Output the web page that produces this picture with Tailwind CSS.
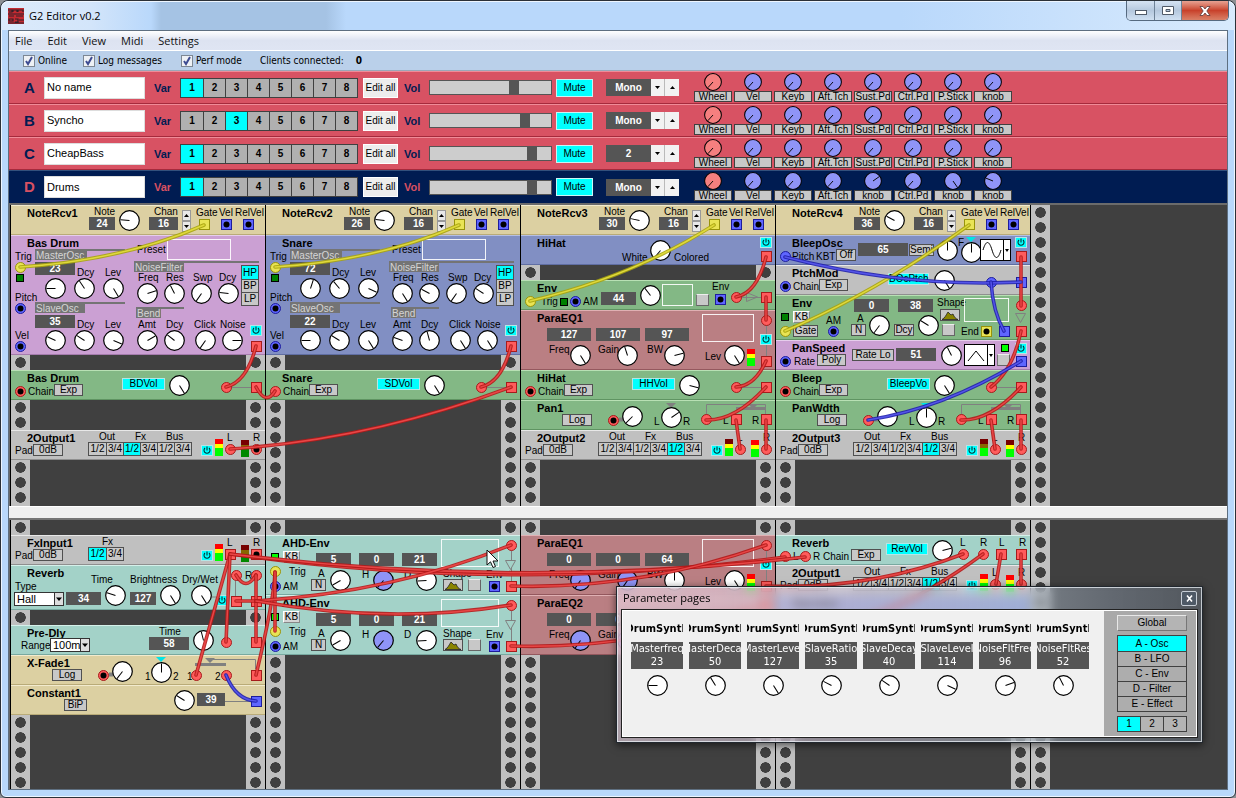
<!DOCTYPE html>
<html lang="en">
<head>
<meta charset="utf-8">
<title>G2 Editor v0.2</title>
<script src="https://cdn.jsdelivr.net/npm/@tailwindcss/browser@4"></script>
</head>
<body class="bg-[#8d9094] font-['Liberation_Sans',Arial,sans-serif] text-[10px] leading-3 text-black">
<div class="relative flex min-h-screen flex-col overflow-hidden rounded-t-lg rounded-b-md border border-[#2b3138] bg-[#b9d8fb] px-[7px] pb-[7px] shadow-[inset_0_0_0_1px_#eef6ff]">

  <!-- Title bar -->
  <header class="-mx-[7px] flex h-[29px] items-center rounded-t-lg bg-[linear-gradient(90deg,#dcebfb_0,#d3e5fa_90px,#b9d8fb_150px,#a5c3e4_160px,#a5c3e4_325px,#b9d8fb_345px,#b9d8fb_900px,#d8eafd_100%)] pl-[7px] shadow-[inset_0_1px_0_#eef6ff]">
    <svg class="size-4" viewBox="0 0 16 16" aria-hidden="true"><rect width="16" height="16" fill="#c32a31"/><path d="M0 2h4v2H1M5 4V2h4v2M10 4V2h5v2M0 6h16M1 8h5M8 8h7M1 11h4v2H1zM7 11h3v3H7M11 12h5M0 15h16" fill="none" stroke="#33202a" stroke-width="1.2"/></svg>
    <h1 class="ml-[5px] font-['Open_Sans','Noto_Sans',sans-serif] text-[11px] leading-4">G2 Editor v0.2</h1>
    <div class="mr-[6px] ml-auto flex h-5 self-start overflow-hidden rounded-b-[5px] border border-t-0 border-[#566a80]">
      <button aria-label="Minimize" class="flex w-[28px] items-center justify-center border-r border-[#6e8297] bg-linear-to-b from-[#d5e3f3] via-[#b5c8de] to-[#d0e0f2]"><svg class="mt-1 h-[7px] w-3" viewBox="0 0 12 7"><rect x=".5" y="1.500" width="11" height="4" fill="#fff" stroke="#505a68"/></svg></button>
      <button aria-label="Maximize" class="flex w-[27px] items-center justify-center border-r border-[#6e8297] bg-linear-to-b from-[#d5e3f3] via-[#b5c8de] to-[#d0e0f2]"><svg class="h-[9px] w-3" viewBox="0 0 12 9"><path d="M.5.5h11v8H.5zM4 3.500h4v2H4z" fill="#fff" fill-rule="evenodd" stroke="#505a68"/></svg></button>
      <button aria-label="Close" class="flex w-[46px] items-center justify-center bg-linear-to-b from-[#e6a292] via-[#c8412b] to-[#d98067]"><svg class="h-[10px] w-[12px]" viewBox="0 0 12 10"><path d="M1 .5h3l2 2.500 2-2.500h3L7.800 5 11 9.500H8L6 7 4 9.500H1L4.200 5z" fill="#fff" stroke="#5b3a3a" stroke-width=".8"/></svg></button>
    </div>
  </header>

  <div class="relative flex flex-1 flex-col border border-[#5e6f80]">
    <!-- Menu -->
    <nav class="flex h-5 items-center gap-[15px] border-b border-white bg-linear-to-b from-white via-[#dde3f1] to-[#dfe5f3] pl-[6px] font-['Open_Sans','Noto_Sans',sans-serif] text-[11px] leading-4 text-[#111]">
      <a href="#file">File</a><a href="#edit">Edit</a><a href="#view">View</a><a href="#midi">Midi</a><a href="#settings">Settings</a>
    </nav>

    <!-- Status bar -->
    <div class="flex h-5 items-center border-b border-[#9aa7b8] bg-[#bad0ea] pl-[14px] font-['DejaVu_Sans_Condensed','Open_Sans',sans-serif] text-[10px]">
      <label class="flex w-[60px] items-center gap-[3px]"><span class="relative size-3"><input type="checkbox" checked class="block size-3 appearance-none border border-[#7d8793] bg-[#eef1f5]"><svg class="pointer-events-none absolute inset-0" viewBox="0 0 12 12"><path d="M3 6l2 3 4-7" fill="none" stroke="#3e4c92" stroke-width="2"/></svg></span>Online</label>
      <label class="flex w-[98px] items-center gap-[3px]"><span class="relative size-3"><input type="checkbox" checked class="block size-3 appearance-none border border-[#7d8793] bg-[#eef1f5]"><svg class="pointer-events-none absolute inset-0" viewBox="0 0 12 12"><path d="M3 6l2 3 4-7" fill="none" stroke="#3e4c92" stroke-width="2"/></svg></span>Log messages</label>
      <label class="flex w-[79px] items-center gap-[3px]"><span class="relative size-3"><input type="checkbox" checked class="block size-3 appearance-none border border-[#7d8793] bg-[#eef1f5]"><svg class="pointer-events-none absolute inset-0" viewBox="0 0 12 12"><path d="M3 6l2 3 4-7" fill="none" stroke="#3e4c92" stroke-width="2"/></svg></span>Perf mode</label>
      <p class="flex gap-3">Clients connected: <b>0</b></p>
    </div>

    <!-- Slots A to D -->
    <section id="slots" aria-label="Slots"></section>

    <!-- Patch areas -->
    <main class="flex flex-1 flex-col border-t-2 border-[#6b6b6b] bg-[#404040]">
      <section aria-label="Voice area" class="relative h-[301px] overflow-hidden border-l border-[#6b6b6b]">
        <div id="va" class="flex h-full"></div>
        <svg id="va-cables" class="pointer-events-none absolute top-0 left-0 h-[301px] w-[1218px]" viewBox="10 205 1218 301" aria-hidden="true"></svg>
      </section>
      <div role="separator" class="h-[14px] border-t border-b-2 border-t-white border-b-[#757575] bg-[#f0f0f0]"></div>
      <section aria-label="FX area" class="relative flex flex-1 flex-col overflow-hidden border-l border-[#6b6b6b]">
        <div id="fx" class="flex flex-1"></div>
        <svg id="fx-cables" class="pointer-events-none absolute top-0 left-0 h-[269px] w-[1218px]" viewBox="10 520 1218 269" aria-hidden="true"></svg>
      </section>
    </main>
  </div>

  <!-- Parameter pages window -->
  <section aria-label="Parameter pages" class="absolute top-[585px] left-[615px] flex w-[587px] flex-col border border-[#22282f] bg-[linear-gradient(90deg,rgb(240_220_235/.6)_0,rgb(215_205_225/.5)_40%,rgb(205_222_240/.4)_70%,rgb(150_165_185/.4)_85%,rgb(100_110_122/.5)_100%)] px-[4px] pb-[4px] shadow-[inset_0_0_0_1px_rgb(235_240_245/.75),0_2px_8px_rgb(0_0_0/.6)] backdrop-blur-[5px]">
    <header class="flex h-[22px] items-center">
      <h2 class="ml-[2px] font-['Open_Sans','Noto_Sans',sans-serif] text-[11px] leading-4">Parameter pages</h2>
      <button aria-label="Close" class="mr-px ml-auto flex h-[15px] w-4 items-center justify-center rounded-[2px] border border-[#c7ced6] bg-[#4e5966]"><svg class="size-[7px]" viewBox="0 0 7 7"><path d="M1 .5l5 6M6 .5l-5 6" stroke="#fff" stroke-width="1.600"/></svg></button>
    </header>
    <div class="flex border border-[#222] bg-[#f0f0f0] outline outline-1 -outline-offset-2 outline-white">
      <div id="params" class="flex flex-1 gap-[6px] pt-[12px] pl-[9px]"></div>
      <div class="flex w-[93px] flex-col gap-1 bg-[#a9a9a9] pt-[5px] pr-[10px] pb-[5px] pl-[13px]">
        <button class="h-4 border border-t-[#e8e8e8] border-r-[#777] border-b-[#777] border-l-[#e8e8e8] bg-[#b4b4b4]">Global</button>
        <div class="flex flex-col border border-[#404040]">
          <button class="h-[15px] bg-[#00ffff]">A - Osc</button>
          <button class="h-[15px] border-t border-[#404040] bg-[#adadad]">B - LFO</button>
          <button class="h-[15px] border-t border-[#404040] bg-[#adadad]">C - Env</button>
          <button class="h-[15px] border-t border-[#404040] bg-[#adadad]">D - Filter</button>
          <button class="h-[15px] border-t border-[#404040] bg-[#adadad]">E - Effect</button>
        </div>
        <div class="flex h-4 border border-[#404040]">
          <button class="flex-1 bg-[#00ffff]">1</button>
          <button class="flex-1 border-l border-[#404040] bg-[#b4b4b4]">2</button>
          <button class="flex-1 border-l border-[#404040] bg-[#b4b4b4]">3</button>
        </div>
      </div>
    </div>
  </section>

  <!-- Mouse pointer -->
  <svg class="pointer-events-none absolute top-[548px] left-[485px] h-[20px] w-[13px]" viewBox="0 0 13 20" aria-hidden="true"><path d="M1 1v15l3.500-3.200L7 18.500l2.500-1L7 12h5z" fill="#fff" stroke="#111"/></svg>
</div>

<script>
const C = { r: ['#ff5c5c', '#a51c1c'], b: ['#5f66ff', '#1d1d9c'], y: ['#e9e455', '#98930a'] };
const at = (x, y, w, h) => `style="left:${x}px;top:${y}px${w ? `;width:${w}px` : ''}${h ? `;height:${h}px` : ''}"`;

// Dial face of diameter 21 with its pointer at an angle measured from twelve o'clock
const dial = (a, fill = '#fff', cls = 'block size-[21px]') =>
  `<svg class="${cls}" viewBox="0 0 21 21"><circle cx="10.5" cy="10.5" r="9.8" fill="${fill}" stroke="#000" stroke-width="1.200"/><path d="M10.5 10.500V1.500" stroke="#000" transform="rotate(${a} 10.5 10.5)"/></svg>`;

// Module parts, placed by their coordinates on the module's panel
const name = s => `<h3 class="absolute top-[2px] left-4 text-[11px] leading-3 font-bold whitespace-nowrap">${s}</h3>`;
const t = (x, y, s) => `<span class="absolute whitespace-nowrap" ${at(x, y)}>${s}</span>`;
const val = (x, y, w, s) => `<output class="absolute h-[13px] bg-[#555] text-center leading-[13px] font-bold text-white" ${at(x, y, w)}>${s}</output>`;
const k = (x, y, a, f) => `<div class="absolute" ${at(x - 10, y - 10)}>${dial(a, f)}</div>`;
const kb = (x, y, a) => k(x, y, a, '#8f94f7');
const btn = (x, y, w, s) => `<button class="absolute h-3 border border-[#505050] bg-[#c8c8c8] text-center leading-[10px] whitespace-nowrap" ${at(x, y, w)}>${s}</button>`;
const soft = (x, y, w, s) => `<button class="absolute h-3 border border-t-white border-r-[#888] border-b-[#888] border-l-white bg-[#d4d4d4] text-center leading-[10px]" ${at(x, y, w)}>${s}</button>`;
const tag = (x, y, w, s) => `<span class="absolute h-3 border border-[#b5e6e6] bg-[#00ffff] text-center leading-[10px] whitespace-nowrap" ${at(x, y, w)}>${s}</span>`;
const sq = (x, y) => `<button aria-label="Reset" class="absolute h-3 w-[13px] border border-t-[#eee] border-r-[#666] border-b-[#666] border-l-[#777] bg-[#c8c8c8]" ${at(x, y)}></button>`;
const led = (x, y, f = '#008000') => `<svg class="absolute size-[8px]" ${at(x, y)} viewBox="0 0 8 8"><rect x=".5" y=".5" width="7" height="7" fill="${f}" stroke="#000"/></svg>`;
const jack = (x, y, c, round, hole) => `<svg class="absolute size-[11px]" ${at(x - 5, y - 5)} viewBox="0 0 11 11">${round
  ? `<circle cx="5.5" cy="5.5" r="5" fill="${C[c][0]}" stroke="${C[c][1]}"/>` : `<rect x=".5" y=".5" width="10" height="10" fill="${C[c][0]}" stroke="${C[c][1]}"/>`}${hole ? '<circle cx="5.500" cy="5.500" r="3" fill="#000"/>' : ''}</svg>`;
const inp = (x, y, c, h) => jack(x, y, c, true, h);
const out = (x, y, c, h) => jack(x, y, c, false, h);
const pow = (x, y) => `<button aria-label="Power" class="absolute h-[11px] w-3 border border-[#b5e6e6] bg-[#00ffff]" ${at(x, y)}><svg class="block h-[9px] w-[10px]" viewBox="0 0 10 9"><path d="M3 2a3 3 0 1 0 4 0M5 .5v4" fill="none" stroke="#033" stroke-width="1.1"/></svg></button>`;
const meter = (x, y, a, b, c) => `<svg class="absolute h-[17px] w-2" ${at(x, y)} viewBox="0 0 8 17"><path d="M0 0h8v5H0z" fill="${a}"/><path d="M0 5h8v4H0z" fill="${b}"/><path d="M0 9h8v8H0z" fill="${c}"/></svg>`;
const lit = (x, y) => meter(x, y, '#f00', '#ff0', '#0f0');
const mid = (x, y) => meter(x, y, '#700', '#ff0', '#0f0');
const low = (x, y) => meter(x, y, '#700', '#860', '#0f0');
const dim = (x, y) => meter(x, y, '#700', '#860', '#080');
const screen = (x, y, w, h) => `<div class="absolute border border-white/90" ${at(x, y, w, h)}></div>`;
const wire = (d, w = 1, f = 'none') => `<svg class="absolute inset-0 h-full w-full" aria-hidden="true"><path d="${d}" fill="${f}" stroke="#808080" stroke-width="${w}"/></svg>`;
const tri = (x, y, f) => `<svg class="absolute h-[5px] w-[10px]" ${at(x - 5, y - 2)} viewBox="0 0 10 5"><path d="M0 0h10L5 5z" fill="${f}"/></svg>`;
const head = (x, y, w, lw, s) => `<div class="absolute border-t-2 border-[#747474]" ${at(x, y, lw)}><span class="block h-[9px] bg-[#747474] pl-px text-[10px] leading-[9px] whitespace-nowrap text-[#d4d4d4]" style="width:${w}px">${s}</span></div>`;
const seg = (x, items, on) => `<div class="absolute top-3 flex h-[14px] border border-[#505050]" style="left:${x}px">${items.map((s, i) =>
  `<button class="${i === on ? 'w-[17px] bg-[#00ffff]' : 'w-[17px] bg-[#c8c8c8]'} ${i ? 'border-l border-[#505050]' : ''} text-center text-[10px]">${s}</button>`).join('')}</div>`;
const shape = (x, y) => `<button aria-label="Shape" class="absolute h-3 w-5 border border-[#505050] bg-[#c8c8c8]" ${at(x, y)}><svg class="block h-[10px] w-[18px]" viewBox="0 0 18 10"><path d="M1 9.500C4 8 5 5 7 2l3 3 2-1c1 3 3 5 5 5.500z" fill="#8a8400" stroke="#222" stroke-width=".8"/></svg></button>`;
const wave = (x, y, d) => `<button aria-label="Waveform" class="absolute flex h-[22px] w-[31px] border border-black bg-white" ${at(x, y)}><svg class="block h-5 w-[29px]" viewBox="0 0 29 20"><path d="${d}" fill="none" stroke="#000"/><path d="M22.500 0v20" stroke="#000"/><path d="M24 9h4l-2 3z"/></svg></button>`;
const select = (x, y, w, s, opts, label) => `<div class="absolute flex h-[14px] border border-[#333] bg-white" ${at(x, y, w)}><select aria-label="${label}" class="min-w-0 flex-1 appearance-none bg-white pl-[2px] text-[11px] leading-3 outline-none">${[s, ...opts].map(o => `<option>${o}</option>`).join('')}</select><svg class="h-3 w-[9px] shrink-0 border-l border-[#333] bg-[#ddd]" viewBox="0 0 8 12"><path d="M1 4.500h6L4 8z"/></svg></div>`;

const palette = {
  sand: 'relative border-t border-b border-t-[#f2ebce] border-b-[#b9ab78] bg-[#dcd0a2]',
  plum: 'relative border-t border-b border-t-[#e6cdec] border-b-[#a57bad] bg-[#cba0d3]',
  blue: 'relative border-t border-b border-t-[#b5bfe3] border-b-[#606ea3] bg-[#818fc3]',
  green: 'relative border-t border-b border-t-[#b8e0b4] border-b-[#5f9462] bg-[#83b885]',
  red: 'relative border-t border-b border-t-[#e0b0b3] border-b-[#94585e] bg-[#ba7f83]',
  teal: 'relative border-t border-b border-t-[#d5f0ea] border-b-[#78a9a0] bg-[#a3d2c8]',
  grey: 'relative border-t border-b border-t-[#e8e8e8] border-b-[#8f8f8f] bg-[#c0c0c0]',
};
const mod = (units, colour, ...parts) => `<article class="${palette[colour]}" style="height:${units * 15}px"><div class="absolute -top-px left-0 h-full w-full">${parts.join('')}</div></article>`;
const gap = units => `<div style="height:${units * 15}px"></div>`;

const noteRcv = (n, note, a) => mod(2, 'sand', name('NoteRcv' + n), t(83, 1, 'Note'), val(78, 12, 26, note), k(118, 15, a), t(143, 1, 'Chan'), val(138, 12, 29, '16'),
  `<div class="absolute top-[5px] left-[171px] flex w-[9px] flex-col"><button aria-label="Up" class="h-[11px] border border-[#999] bg-[#e8e8e8]"><svg class="block h-[9px] w-[7px]" viewBox="0 0 7 9"><path d="M1 6h5L3.500 3z"/></svg></button><button aria-label="Down" class="h-[11px] border border-[#999] bg-[#e8e8e8]"><svg class="block h-[9px] w-[7px]" viewBox="0 0 7 9"><path d="M1 3h5L3.500 6z"/></svg></button></div>`,
  t(185, 2, 'Gate'), t(208, 2, 'Vel'), t(224, 2, 'RelVel'), out(193, 19, 'y'), out(215, 19, 'b', 1), out(237, 19, 'b', 1));

const drum = (title, colour, m, s, a) => mod(8, colour, name(title), t(4, 16, 'Trig'), inp(9, 32, 'y'), led(5, 39), t(4, 57, 'Pitch'), inp(9, 73, 'b', 1), t(4, 95, 'Vel'), inp(9, 111, 'b', 1),
  head(24, 14, 52, 90, 'MasterOsc'), val(24, 27, 40, m), t(66, 32, 'Dcy'), t(94, 32, 'Lev'), k(44, 53, a[0]), k(73, 53, a[1]), k(102, 53, a[2]),
  head(24, 67, 50, 90, 'SlaveOsc'), val(24, 80, 40, s), t(66, 84, 'Dcy'), t(94, 84, 'Lev'), k(44, 105, a[3]), k(73, 105, a[4]), k(102, 105, a[5]),
  t(126, 9, 'Preset'), screen(156, 4, 64, 21), head(123, 26, 50, 125, 'NoiseFilter'), t(127, 37, 'Freq'), t(155, 37, 'Res'), t(182, 37, 'Swp'), t(208, 37, 'Dcy'),
  k(136, 58, a[6]), k(163, 58, a[7]), k(190, 58, a[8]), k(217, 58, a[9]),
  `<div class="absolute top-[30px] left-[230px] flex w-[18px] flex-col border border-[#505050]"><button class="h-[13px] bg-[#00ffff]">HP</button><button class="h-[13px] border-t border-[#505050] bg-[#c8c8c8]">BP</button><button class="h-[13px] border-t border-[#505050] bg-[#c8c8c8]">LP</button></div>`,
  head(125, 72, 25, 48, 'Bend'), t(127, 84, 'Amt'), t(155, 84, 'Dcy'), t(183, 84, 'Click'), t(209, 84, 'Noise'),
  k(136, 105, a[10]), k(163, 105, a[11]), k(194, 105, a[12]), k(221, 105, a[13]), pow(239, 90), out(245, 111, 'r'));

const level = (title, label, a, chained) => mod(2, 'green', name(title), wire('M220 17.500H240'), inp(9, 21, 'r', !chained), t(17, 16, 'Chain'), btn(43, 14, 29, 'Exp'), tag(111, 8, 43, label), k(168, 15, a), inp(215, 17, 'r'), out(245, 17, 'r'));

const output = (title, on, m1, m2, hole) => mod(2, 'grey', name(title), t(4, 15, 'Pad'), btn(22, 14, 30, '0dB'), t(88, 1, 'Out'), t(124, 1, 'Fx'), t(155, 1, 'Bus'),
  seg(77, ['1/2', '3/4', '1/2', '3/4', '1/2', '3/4'], on), pow(190, 15), m1(204, 9), m2(230, 10), t(216, 2, 'L'), t(242, 2, 'R'), inp(219, 19, 'r'), inp(245, 19, 'r', hole));

const paraEq = (title, v, a, dialFn) => mod(4, 'red', name(title), wire('M245.500 14V48'), val(26, 18, 44, v[0]), val(75, 18, 44, v[1]), val(124, 18, 44, v[2]),
  t(28, 34, 'Freq'), t(77, 34, 'Gain'), t(126, 34, 'BW'), t(184, 41, 'Lev'), dialFn(59, 45, a[0]), dialFn(106, 45, a[1]), k(153, 45, a[2]), k(213, 45, 148),
  lit(226, 39), screen(181, 4, 52, 28), inp(245, 10, 'r'), pow(239, 24), out(245, 51, 'r'));

const pan = (title, hole, a1, a2, f) => mod(2, 'green', name(title), wire('M185.500 17V4.500H244.500V14'), wire('M215 8.500H245', 3), tri(150, 5, f), tri(232, 6, '#808080'),
  btn(41, 14, 30, 'Log'), wire('M98 19.500H102', 4), inp(92, 20, 'r', hole), k(111, 16, a1), t(133, 16, 'L'), k(150, 17, a2), t(162, 16, 'R'), inp(185, 19, 'r'), t(202, 15, 'L'), out(215, 19, 'r'), t(231, 15, 'R'), out(245, 19, 'r'));

const ahd = () => mod(4, 'teal', name('AHD-Env'), wire('M245.500 16V46'), led(5, 18, '#0f0'), soft(17, 16, 17, 'KB'), inp(9, 36, 'y'), t(23, 31, 'Trig'), inp(9, 51, 'b', 1), t(17, 46, 'AM'),
  val(50, 18, 35, '5'), val(93, 18, 35, '0'), val(136, 18, 35, '21'), t(52, 33, 'A'), btn(45, 44, 15, 'N'), k(74, 45, -120), t(96, 34, 'H'), kb(117, 45, -140), t(138, 34, 'D'), k(160, 45, -93),
  t(177, 33, 'Shape'), shape(177, 44), sq(202, 44), t(220, 34, 'Env'), out(228, 51, 'b', 1), out(245, 51, 'r'), screen(175, 4, 58, 28), inp(245, 10, 'r'), wire('M239.500 25.500h10l-5 9z', 1, '#a3d2c8'));

const va = [
  [noteRcv(1, 24, -86), drum('Bas Drum', 'plum', 23, 35, [-90, -34, 149, -65, -57, 113, 72, -27, -145, -84, 60, -52, -145, 90]), gap(1), level('Bas Drum', 'BDVol', 148), gap(2), output('2Output1', 2, lit, dim, 1)],
  [noteRcv(2, 26, -84), drum('Snare', 'blue', 72, 22, [18, -40, 115, -90, -58, 148, 148, -62, -145, -57, -70, -15, 148, 148]), gap(1), level('Snare', 'SDVol', 148, 1)],
  [noteRcv(3, 30, -78),
    mod(2, 'blue', name('HiHat'), t(101, 17, 'White'), k(139, 15, -140), t(153, 17, 'Colored'), pow(239, 2), out(245, 21, 'r')), gap(1),
    mod(2, 'green', name('Env'), inp(9, 21, 'y'), t(20, 16, 'Trig'), led(39, 18), inp(54, 21, 'b', 1), t(62, 16, 'AM'), val(80, 12, 35, '44'), k(129, 15, -38), screen(141, 4, 31, 22), sq(175, 14), t(191, 1, 'Env'), out(199, 19, 'b', 1), wire('M220 17.500H240M225.500 12.500v9l11-4.500z'), inp(215, 17, 'r'), out(245, 17, 'r')),
    paraEq('ParaEQ1', [127, 107, 97], [148, -18, 75], k), level('HiHat', 'HHVol', 105), pan('Pan1', 1, -135, 55, '#808080'), output('2Output2', 4, mid, lit)],
  [noteRcv(4, 36, -62),
    mod(2, 'blue', name('BleepOsc'), inp(9, 21, 'b'), t(16, 16, 'Pitch'), t(40, 16, 'KBT'), btn(60, 14, 20, 'Off'), val(82, 8, 50, '65'), btn(133, 9, 25, 'Semi'), k(171, 15, 0), t(182, 2, 'F'), k(195, 17, 0), tri(195, 4, '#00e5e5'), wave(204, 4, 'M2 10C5 0 8 0 11 10S17 20 20 10'), pow(239, 2), out(245, 21, 'r')),
    mod(2, 'grey', name('PtchMod'), wire('M220 17.500H240'), inp(9, 21, 'b', 1), t(17, 16, 'Chain'), btn(43, 14, 29, 'Exp'), tag(112, 8, 41, 'BOcPtch'), k(168, 15, 148), inp(215, 17, 'b'), out(245, 17, 'b')),
    mod(3, 'green', name('Env'), val(78, 4, 35, '0'), val(122, 4, 35, '38'), t(161, 2, 'Shape'), shape(164, 14), screen(188, 3, 45, 24), led(5, 18), soft(17, 16, 17, 'KB'), t(50, 20, 'AM'), inp(57, 36, 'b', 1), inp(9, 36, 'y'), btn(17, 30, 25, 'Gate'), t(81, 18, 'A'), btn(75, 29, 15, 'N'), k(103, 30, -143), btn(118, 29, 20, 'Dcy'), k(152, 30, -58), sq(166, 29), t(185, 31, 'End'), out(210, 36, 'y', 1), out(228, 36, 'b'), wire('M239.500 18.500h10l-5 9z'), inp(245, 10, 'r'), out(245, 36, 'r')),
    mod(2, 'plum', name('PanSpeed'), inp(9, 21, 'b', 1), t(18, 16, 'Rate'), btn(41, 14, 29, 'Poly'), btn(76, 9, 42, 'Rate Lo'), val(120, 8, 40, '51'), k(175, 15, -27), wave(188, 4, 'M3 16L11 6l8 10'), led(225, 4, '#0f0'), sq(221, 14), pow(239, 3), out(245, 21, 'b')),
    level('Bleep', 'BleepVo', 148), pan('PanWdth', 0, 80, 0, '#00e5e5'), output('2Output3', 4, low, mid)],
];

const fx = [
  [gap(1),
    mod(2, 'grey', name('FxInput1'), t(4, 15, 'Pad'), btn(22, 14, 30, '0dB'), t(91, 1, 'Fx'), seg(77, ['1/2', '3/4'], 0), pow(190, 15), lit(204, 9), dim(230, 10), t(216, 2, 'L'), t(242, 2, 'R'), out(219, 19, 'r'), out(245, 19, 'r', 1)),
    mod(3, 'teal', name('Reverb'), wire('M224.500 16V31M200 32H205'), t(4, 16, 'Type'), select(3, 27, 50, 'Hall', ['Small', 'Medium', 'Large'], 'Type'), val(55, 27, 35, '34'), t(80, 9, 'Time'), k(104, 30, -72), t(119, 9, 'Brightness'), val(119, 27, 26, '127'), k(159, 30, 148), t(171, 9, 'Dry/Wet'), k(190, 30, 148), pow(205, 30), inp(225, 10, 'r'), t(234, 5, 'R'), inp(245, 10, 'r'), out(225, 36, 'r'), out(245, 36, 'r')), gap(1),
    mod(2, 'teal', name('Pre-Dly'), t(10, 15, 'Range'), select(39, 13, 40, '100m', ['25m', '500m', '1s'], 'Range'), val(138, 12, 40, '58'), t(148, 1, 'Time'), k(192, 15, -14), inp(215, 17, 'r'), out(245, 17, 'r')),
    mod(2, 'sand', name('X-Fade1'), wire('M199 4.500H244.500V14'), wire('M184 9.500H215', 3), tri(199, 5, '#808080'), tri(150, 4, '#00e5e5'), btn(41, 14, 30, 'Log'), wire('M98 19.500H102', 4), inp(92, 20, 'r', 1), k(111, 16, -142), t(134, 16, '1'), k(150, 17, 0), t(162, 16, '2'), t(176, 16, '1'), inp(185, 20, 'r'), t(204, 16, '2'), inp(215, 20, 'r'), out(245, 20, 'r')),
    mod(2, 'sand', name('Constant1'), wire('M214 16.500H240'), btn(53, 14, 23, 'BiP'), k(173, 15, -58), val(186, 8, 28, '39'), out(245, 16, 'b'))],
  [gap(1), ahd(), ahd()],
  [gap(1), paraEq('ParaEQ1', [0, 0, 64], [-145, -145, 0], kb), paraEq('ParaEQ2', [0, 0, 64], [-145, -145, 0], kb)],
  [gap(1),
    mod(2, 'teal', name('Reverb'), inp(9, 21, 'r'), t(17, 16, 'L'), inp(29, 21, 'r'), t(37, 16, 'R Chain'), btn(75, 14, 30, 'Exp'), tag(110, 8, 42, 'RevVol'), k(166, 15, 75), t(184, 2, 'L'), t(204, 2, 'R'), t(223, 2, 'L'), t(243, 2, 'R'), inp(187, 19, 'r'), inp(207, 19, 'r'), out(225, 19, 'r'), out(245, 19, 'r')),
    output('2Output1', 4, lit, lit), mod(2, 'blue', name('Operator'))],
];

const rail = 'w-[19px] bg-[radial-gradient(circle_at_center,#404040_5px,#c0c0c0_5.5px)] bg-[length:19px_15px]';
const rack = cols => cols.map(c => `<div class="relative w-[255px] shrink-0 border-l border-black"><div class="absolute inset-0 flex justify-between"><div class="${rail}"></div><div class="${rail}"></div></div><div class="relative">${c.join('')}</div></div>`).join('') +
  `<div class="border-l border-black"><div class="h-full ${rail}"></div></div>`;
document.getElementById('va').innerHTML = rack(va);
document.getElementById('fx').innerHTML = rack(fx);

// Patch cables: colour, path
const cable = ([c, d]) => {
  const [edge, core] = { r: ['#b51a1a', '#e84646'], b: ['#2020ac', '#5454ea'], y: ['#a8a410', '#dfd93c'] }[c];
  return `<path d="${d}" fill="none" stroke="${edge}" stroke-width="3.600" stroke-linecap="round" stroke-opacity=".9"/><path d="${d}" fill="none" stroke="${core}" stroke-width="1.500" stroke-linecap="round"/>`;
};
document.getElementById('va-cables').innerHTML = [
  ['y', 'M204 225Q125 260 20 267'], ['y', 'M459 225Q380 260 275 267'], ['y', 'M714 225Q632 277 530 301'], ['y', 'M969 225Q877 292 785 331'],
  ['r', 'M256 346Q247 382 226 387'], ['r', 'M256 387Q266 406 275 391'], ['r', 'M511 346Q502 382 481 387'], ['r', 'M511 387Q370 440 230 449'],
  ['r', 'M766 257Q757 293 736 297'], ['r', 'M766 297V320'], ['r', 'M766 361Q755 386 736 387'], ['r', 'M766 387Q735 421 706 420'], ['r', 'M736 420L740 449'], ['r', 'M766 420V449'],
  ['r', 'M1021 257V306'], ['r', 'M1021 331Q1013 370 991 387'], ['r', 'M1021 387Q990 421 961 420'], ['r', 'M991 420L995 449'], ['r', 'M1021 420V449'],
  ['b', 'M785 257Q905 288 1021 282'], ['b', 'M991 282Q993 312 1004 331'], ['b', 'M1021 361Q945 408 868 420'],
].map(cable).join('');
document.getElementById('fx-cables').innerHTML = [
  ['r', 'M230 554L196 675'], ['r', 'M230 554L226 642'], ['r', 'M230 554Q510 594 785 557'], ['r', 'M230 554Q520 590 805 557'],
  ['r', 'M236 575Q246 592 256 575'], ['r', 'M256 575V642'], ['r', 'M236 601H256'], ['r', 'M256 675Q274 600 275 572'], ['r', 'M275 572V631'],
  ['r', 'M256 601Q395 592 511 545'], ['r', 'M256 601Q390 625 511 605'], ['r', 'M511 586Q640 590 766 545'], ['r', 'M511 646Q640 650 766 605'],
  ['r', 'M963 554Q870 590 766 586'], ['r', 'M983 554Q880 630 766 646'], ['r', 'M1001 554L996 584'], ['r', 'M1021 554V584'],
  ['b', 'M226 675Q236 700 256 701'],
].map(cable).join('');

// Slot strips
const slots = [
  { id: 'A', patch: 'No name', v: 1, vol: 71, mode: 'Mono' },
  { id: 'B', patch: 'Syncho', v: 3, vol: 81, mode: 'Mono' },
  { id: 'C', patch: 'CheapBass', v: 1, vol: 87, mode: '2' },
  { id: 'D', patch: 'Drums', v: 1, vol: 87, mode: 'Mono', sel: true },
];
const morphs = ['Wheel', 'Vel', 'Keyb', 'Aft.Tch', 'Sust.Pd', 'Ctrl.Pd', 'P.Stick', 'knob'];
const drumMorphs = ['Wheel', 'Vel', 'Keyb', 'Aft.Tch', 'knob', 'Ctrl.Pd', 'knob', 'knob'];
const drumAngles = [-138, -138, -138, -138, 55, -138, 145, -68];
document.getElementById('slots').innerHTML = slots.map(s => `
<div class="${s.sel ? 'flex h-[33px] items-center border-t border-[#33507c] bg-[#001c52] text-[#d85062]' : 'flex h-[33px] items-center border-t border-b border-t-[#f08b98] border-b-[#a52a3c] bg-[#d85263] text-[#001c52]'}">
  <span class="w-10 pl-px text-center text-[15px] leading-4 font-bold">${s.id}</span>
  <input type="text" value="${s.patch}" aria-label="Patch name ${s.id}" class="-ml-[5px] h-[22px] w-[101px] border border-[#ddd] bg-white px-[2px] pb-px text-[11px] text-black">
  <span class="ml-[9px] w-[26px] text-[11px] font-bold">Var</span>
  <div class="flex h-5 border border-[#404040] text-black">${[1, 2, 3, 4, 5, 6, 7, 8].map(n => `<button class="${n === s.v ? 'w-[22px] bg-[#00ffff]' : 'w-[22px] bg-[#b0b0b0]'} ${n > 1 ? 'border-l border-[#404040]' : ''} font-bold">${n}</button>`).join('')}</div>
  <button class="ml-[5px] h-5 w-[35px] border border-white bg-[#ededed] text-black">Edit all</button>
  <label class="ml-[6px] w-[25px] text-[11px] font-bold" for="vol-${s.id}">Vol</label>
  <input id="vol-${s.id}" type="range" value="${s.vol}" class="h-[15px] w-[123px] appearance-none border border-[#555] bg-[#cdcdcd] [&::-webkit-slider-thumb]:h-[13px] [&::-webkit-slider-thumb]:w-[10px] [&::-webkit-slider-thumb]:appearance-none [&::-webkit-slider-thumb]:bg-[#555]">
  <button class="ml-1 h-[18px] w-[37px] border border-[#c8f4f4] bg-[#00ffff] text-black">Mute</button>
  <output class="ml-[13px] h-[17px] w-[45px] bg-[#555] text-center leading-[17px] font-bold text-white">${s.mode}</output>
  <button aria-label="Previous" class="flex h-[17px] w-[14px] items-center justify-center border-r border-[#bbb] bg-[#f2f2f2]"><svg class="h-[3px] w-[5px]" viewBox="0 0 5 3"><path d="M0 0h5L2.500 3z"/></svg></button>
  <button aria-label="Next" class="flex h-[17px] w-[14px] items-center justify-center bg-[#f2f2f2]"><svg class="h-[3px] w-[5px]" viewBox="0 0 5 3"><path d="M0 3h5L2.500 0z"/></svg></button>
  <div class="ml-[15px] flex gap-[2px] self-start pt-px text-black">${(s.sel ? drumMorphs : morphs).map((m, i) => `<div class="flex w-[38px] flex-col items-center">${dial(s.sel ? drumAngles[i] : -138, i ? '#8f94f7' : '#f57f7f', 'block size-[18px]')}<button class="h-[11px] w-full border border-[#404040] bg-[#c8c8c8] leading-[9px]">${m}</button></div>`).join('')}</div>
</div>`).join('');

// Parameter page contents
document.getElementById('params').innerHTML = [
  ['Masterfreq', 23, -90], ['MasterDecay', 50, -32], ['MasterLevel', 127, 148], ['SlaveRatio', 35, -63], ['SlaveDecay', 40, -55], ['SlaveLevel', 114, 115], ['NoiseFltFreq', 96, 70], ['NoiseFltRes', 52, -27],
].map(([n, v, a]) => `<div class="flex w-[52px] flex-col items-center font-['DejaVu_Sans_Condensed','Open_Sans',sans-serif] text-[11px] leading-[13px]">
  <div class="flex w-full justify-center overflow-hidden font-bold"><span>DrumSynth</span></div>
  <div class="mt-[7px] flex w-full flex-col items-center overflow-hidden bg-[#555] pb-px whitespace-nowrap text-white"><span>${n}</span><span>${v}</span></div>
  <div class="mt-[6px]">${dial(a)}</div></div>`).join('');
</script>
</body>
</html>
